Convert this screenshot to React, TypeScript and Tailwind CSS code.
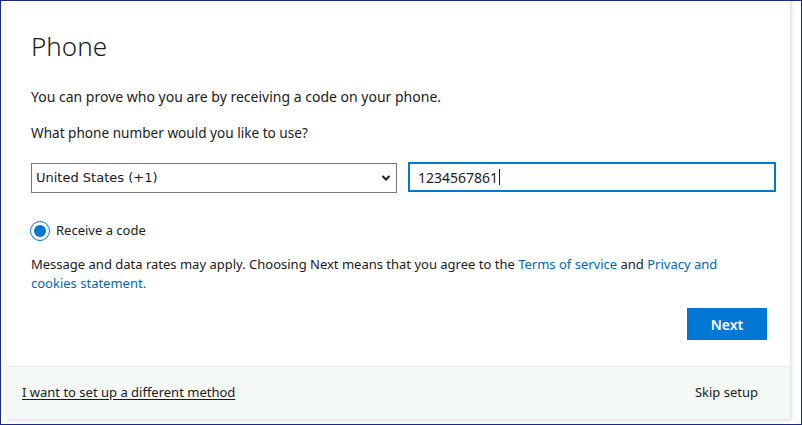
import React from "react";

export default function App() {
  const font = { fontFamily: '"Segoe UI", "Noto Sans", "Open Sans", sans-serif' };
  return (
    <div
      className="w-[802px] h-[425px] border border-[#1b2a7b] bg-white overflow-hidden flex flex-col"
      style={font}
    >
      <div className="flex-1 flex flex-col ml-[5px] mr-[11px] mb-[5px] mt-[-4px] bg-white shadow-[1px_1px_4px_rgba(0,0,0,0.18)]">
        <div className="flex-1 pl-[25px] pr-[14px] pt-[31px] text-[#1b1b1b]">
          <h1 className="text-[26px] font-light leading-[36px] text-[#1b1b1b]">Phone</h1>
          <p className="mt-[24px] text-[14px] leading-[18px]">
            You can prove who you are by receiving a code on your phone.
          </p>
          <p className="mt-[18px] text-[13.6px] leading-[18px]">What phone number would you like to use?</p>
          <div className="mt-[21px] flex gap-[11px]">
            <div
              className="w-[366px] h-[30px] border border-[#767676] flex items-center justify-between pl-[4px] pr-[5px] text-[13px]"
              style={{ fontFamily: '"DejaVu Sans", sans-serif' }}
            >
              <span>United States (+1)</span>
              <svg width="10" height="8" viewBox="0 0 10 8">
                <path d="M1.5 2 L5 5.5 L8.5 2" stroke="#1b1b1b" strokeWidth="2" fill="none" />
              </svg>
            </div>
            <div className="w-[368px] h-[30px] border-2 border-[#0078d4] flex items-center pl-[8px] text-[14px] mt-[-1px]">
              <span>1234567861</span>
              <span className="w-px h-[16px] bg-[#1b1b1b] ml-px" />
            </div>
          </div>
          <div className="mt-[28px] flex items-center gap-[6px]">
            <div className="w-[20px] h-[20px] rounded-full border-[1.5px] border-[#0078d4] flex items-center justify-center ml-[-1px]">
              <div className="w-[12px] h-[12px] rounded-full bg-[#0078d4]" />
            </div>
            <span className="text-[13px] text-[#1b1b1b]">Receive a code</span>
          </div>
          <div className="mt-[14px] text-[13px] leading-[19px] pr-[30px]">
            <div>
              <span>Message and data rates may apply. Choosing Next means that you agree to the </span>
              <span className="text-[#0067b8]">Terms of service</span>
              <span> and </span>
              <span className="text-[#0067b8]">Privacy and</span>
            </div>
            <div className="text-[#0067b8]">cookies statement.</div>
          </div>
          <div className="flex justify-end mt-[15px] pr-[9px]">
            <button className="w-[80px] h-[32px] bg-[#0078d4] text-white text-[14px] font-semibold">Next</button>
          </div>
        </div>
        <div className="h-[53px] border-t border-[#e6e9e8] bg-[#f4f8f6] flex items-center justify-between pl-[16px] pr-[32px] text-[13px] text-[#1b1b1b]">
          <span className="underline underline-offset-2">I want to set up a different method</span>
          <span>Skip setup</span>
        </div>
      </div>
    </div>
  );
}
